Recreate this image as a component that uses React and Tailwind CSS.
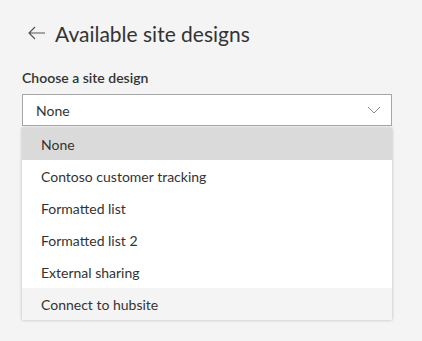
export default function App() {
  const items = [
    "None",
    "Contoso customer tracking",
    "Formatted list",
    "Formatted list 2",
    "External sharing",
    "Connect to hubsite",
  ];
  return (
    <div
      className="w-[422px] h-[341px] bg-[#f4f4f4] text-[#333333] overflow-hidden"
      style={{ fontFamily: 'Lato, "Noto Sans", sans-serif' }}
    >
      <div className="flex items-center pl-[28px] pt-[16px] h-[50px]">
        <svg width="18" height="14" viewBox="0 0 18 14" className="mr-[9px]">
          <path d="M7 1 L1 7 L7 13 M1 7 H17" fill="none" stroke="#555" strokeWidth="1.2" />
        </svg>
        <span className="text-[21px] leading-none text-[#333]">Available site designs</span>
      </div>
      <div className="px-[22px] pt-[19px]">
        <div className="text-[14px] font-semibold leading-[17px] text-[#333]">Choose a site design</div>
        <div className="mt-[8px] w-[370px] h-[32px] border border-[#a6a6a6] bg-white flex items-center justify-between pl-[13px] pr-[10px]">
          <span className="text-[14px]">None</span>
          <svg width="14" height="8" viewBox="0 0 14 8">
            <path d="M1 1 L7 7 L13 1" fill="none" stroke="#8a8a8a" strokeWidth="1" />
          </svg>
        </div>
        <div className="mt-[2px] w-[370px] bg-white shadow-[0_0_3px_rgba(0,0,0,0.25)]">
          {items.map((t, i) => (
            <div
              key={t}
              className={`h-[32px] flex items-center pl-[19px] text-[14px] ${
                i === 0 ? "bg-[#dadada]" : i === 5 ? "bg-[#f4f4f4]" : "bg-white"
              }`}
            >
              {t}
            </div>
          ))}
        </div>
      </div>
    </div>
  );
}
